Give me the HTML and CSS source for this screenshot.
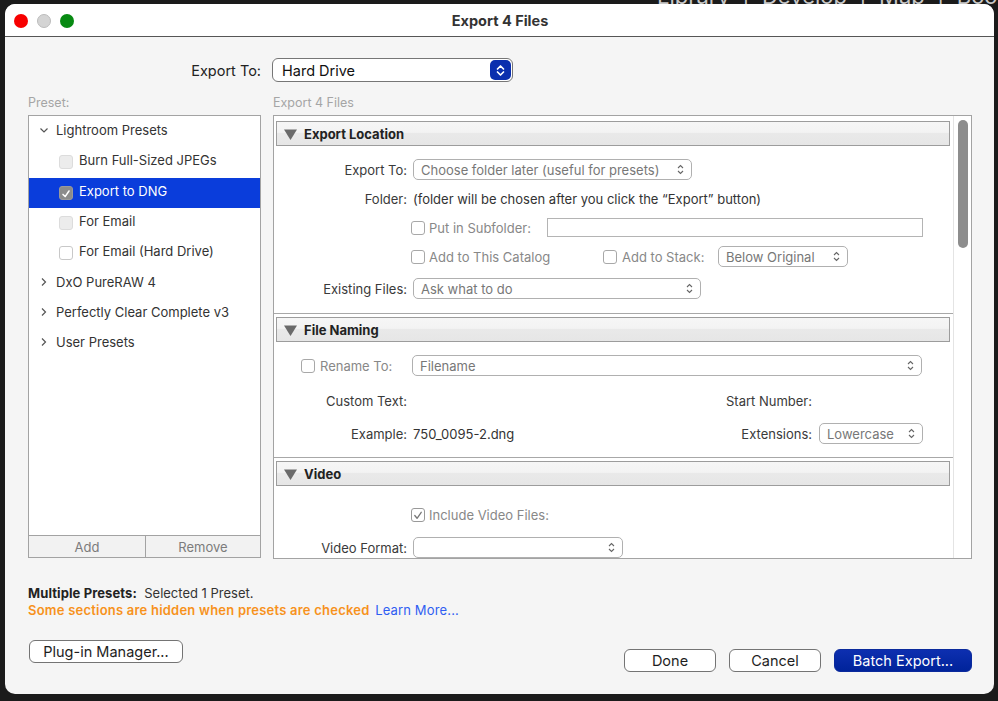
FILE: index.html
```html
<!DOCTYPE html>
<html>
<head>
<meta charset="utf-8">
<title>Export 4 Files</title>
<link rel="stylesheet" href="styles.css">
</head>
<body>
<div class="desktop">
  <div class="app-menu">Library &nbsp;|&nbsp; Develop &nbsp;|&nbsp; Map &nbsp;|&nbsp; Book</div>
  <div class="window">
    <div class="titlebar">
      <div class="lights"><span class="light red"></span><span class="light grey"></span><span class="light green"></span></div>
      <div class="title">Export 4 Files</div>
    </div>
    <div class="content">
      <div class="export-row">
        <div class="export-label">Export To:</div>
        <div class="main-popup">
          <span>Hard Drive</span>
          <span class="blue-step"><svg width="9" height="13" viewBox="0 0 9 13"><path d="M1.5 5 L4.5 2 L7.5 5 M1.5 8 L4.5 11 L7.5 8" fill="none" stroke="#fff" stroke-width="1.7" stroke-linecap="round" stroke-linejoin="round"/></svg></span>
        </div>
      </div>
      <div class="caption-row"><div class="caption">Preset:</div><div class="caption">Export 4 Files</div></div>
      <div class="panels">
        <div class="preset-panel">
          <div class="tree">
            <div class="tree-row folder"><svg class="chev" width="10" height="7" viewBox="0 0 10 7"><path d="M1.5 1.5 L5 5 L8.5 1.5" fill="none" stroke="#555" stroke-width="1.2"/></svg><span>Lightroom Presets</span></div>
            <div class="tree-row child"><span class="tbox dis"></span><span>Burn Full-Sized JPEGs</span></div>
            <div class="tree-row child selected"><span class="tbox on"><svg width="14" height="14" viewBox="0 0 14 14"><path d="M3.5 7.5 L6 10 L10.5 3.5" fill="none" stroke="#fff" stroke-width="1.8" stroke-linecap="round" stroke-linejoin="round"/></svg></span><span>Export to DNG</span></div>
            <div class="tree-row child"><span class="tbox dis"></span><span>For Email</span></div>
            <div class="tree-row child"><span class="tbox"></span><span>For Email (Hard Drive)</span></div>
            <div class="tree-row folder"><svg class="chev" width="10" height="10" viewBox="0 0 10 10"><path d="M3 1.5 L6.5 5 L3 8.5" fill="none" stroke="#555" stroke-width="1.2"/></svg><span>DxO PureRAW 4</span></div>
            <div class="tree-row folder"><svg class="chev" width="10" height="10" viewBox="0 0 10 10"><path d="M3 1.5 L6.5 5 L3 8.5" fill="none" stroke="#555" stroke-width="1.2"/></svg><span>Perfectly Clear Complete v3</span></div>
            <div class="tree-row folder"><svg class="chev" width="10" height="10" viewBox="0 0 10 10"><path d="M3 1.5 L6.5 5 L3 8.5" fill="none" stroke="#555" stroke-width="1.2"/></svg><span>User Presets</span></div>
          </div>
          <div class="tree-buttons"><div class="tb">Add</div><div class="tb">Remove</div></div>
        </div>
        <div class="settings-panel">
          <div class="sections">
            <div class="section first">
              <div class="sec-head"><svg class="tri" width="13" height="11" viewBox="0 0 13 11"><polygon points="0,0.5 13,0.5 6.5,11" fill="#6a6a6a"/></svg>Export Location</div>
              <div class="sec-body loc">
                <div class="row">
                  <div class="lbl">Export To:</div>
                  <div class="popup w-chooser"><span>Choose folder later (useful for presets)</span><svg class="step" width="7" height="11" viewBox="0 0 7 11"><path d="M1 4 L3.5 1.5 L6 4 M1 7 L3.5 9.5 L6 7" fill="none" stroke="#666" stroke-width="1.1"/></svg></div>
                </div>
                <div class="row">
                  <div class="lbl">Folder:</div>
                  <div class="val">(folder will be chosen after you click the “Export” button)</div>
                </div>
                <div class="row">
                  <div class="lbl"></div>
                  <span class="cbox ml"></span><span class="clabel sub">Put in Subfolder:</span>
                  <div class="field"></div>
                </div>
                <div class="row">
                  <div class="lbl"></div>
                  <span class="cbox ml"></span><span class="clabel cat">Add to This Catalog</span>
                  <span class="cbox"></span><span class="clabel stack">Add to Stack:</span>
                  <div class="popup w-below"><span>Below Original</span><svg class="step" width="7" height="11" viewBox="0 0 7 11"><path d="M1 4 L3.5 1.5 L6 4 M1 7 L3.5 9.5 L6 7" fill="none" stroke="#666" stroke-width="1.1"/></svg></div>
                </div>
                <div class="row existing">
                  <div class="lbl">Existing Files:</div>
                  <div class="popup w-ask"><span>Ask what to do</span><svg class="step" width="7" height="11" viewBox="0 0 7 11"><path d="M1 4 L3.5 1.5 L6 4 M1 7 L3.5 9.5 L6 7" fill="none" stroke="#666" stroke-width="1.1"/></svg></div>
                </div>
              </div>
            </div>
            <div class="section">
              <div class="sec-head"><svg class="tri" width="13" height="11" viewBox="0 0 13 11"><polygon points="0,0.5 13,0.5 6.5,11" fill="#6a6a6a"/></svg>File Naming</div>
              <div class="sec-body naming">
                <div class="row">
                  <span class="cbox rename"></span><span class="clabel ren">Rename To:</span>
                  <div class="popup w-file"><span>Filename</span><svg class="step" width="7" height="11" viewBox="0 0 7 11"><path d="M1 4 L3.5 1.5 L6 4 M1 7 L3.5 9.5 L6 7" fill="none" stroke="#666" stroke-width="1.1"/></svg></div>
                </div>
                <div class="row custom">
                  <div class="lbl">Custom Text:</div>
                  <div class="right-lbl">Start Number:</div>
                </div>
                <div class="row example">
                  <div class="lbl">Example:</div>
                  <div class="val ex-val">750_0095-2.dng</div>
                  <div class="ext-lbl">Extensions:</div>
                  <div class="popup w-lower"><span>Lowercase</span><svg class="step" width="7" height="11" viewBox="0 0 7 11"><path d="M1 4 L3.5 1.5 L6 4 M1 7 L3.5 9.5 L6 7" fill="none" stroke="#666" stroke-width="1.1"/></svg></div>
                </div>
              </div>
            </div>
            <div class="section">
              <div class="sec-head"><svg class="tri" width="13" height="11" viewBox="0 0 13 11"><polygon points="0,0.5 13,0.5 6.5,11" fill="#6a6a6a"/></svg>Video</div>
              <div class="sec-body video">
                <div class="row">
                  <div class="lbl"></div>
                  <span class="cbox ml checked"><svg width="13" height="13" viewBox="0 0 13 13"><path d="M3 6.5 L5.5 9.5 L10 3" fill="none" stroke="#777" stroke-width="1.4" stroke-linecap="round" stroke-linejoin="round"/></svg></span><span class="clabel">Include Video Files:</span>
                </div>
                <div class="row vformat">
                  <div class="lbl">Video Format:</div>
                  <div class="popup w-video"><span></span><svg class="step" width="7" height="11" viewBox="0 0 7 11"><path d="M1 4 L3.5 1.5 L6 4 M1 7 L3.5 9.5 L6 7" fill="none" stroke="#666" stroke-width="1.1"/></svg></div>
                </div>
              </div>
            </div>
          </div>
          <div class="scrollbar"><div class="thumb"></div></div>
        </div>
      </div>
      <div class="status">
        <div><b>Multiple Presets:</b>&nbsp; Selected 1 Preset.</div>
        <div><span class="warn">Some sections are hidden when presets are checked</span> <span class="link">Learn More...</span></div>
      </div>
      <div class="footer">
        <div class="btn plugin">Plug-in Manager...</div>
        <div class="actions">
          <div class="btn done">Done</div>
          <div class="btn cancel">Cancel</div>
          <div class="btn primary">Batch Export...</div>
        </div>
      </div>
    </div>
  </div>
</div>
</body>
</html>
```

FILE: styles.css
```css
* { box-sizing: border-box; }
html, body { margin: 0; padding: 0; }
body {
  width: 998px;
  height: 701px;
  background: #1b1b1b;
  font-family: "Inter", "Liberation Sans", sans-serif;
  font-size: 13px;
  color: #333;
  overflow: hidden;
}
.desktop { position: relative; width: 998px; height: 701px; overflow: hidden; }
.app-menu {
  position: absolute;
  left: 657px;
  top: -17px;
  font-size: 22px;
  color: #c8c8c8;
  white-space: nowrap;
}
.window {
  position: absolute;
  left: 5px;
  top: 4px;
  width: 989px;
  height: 690px;
  background: #f5f5f5;
  border-radius: 10px;
  overflow: hidden;
  display: flex;
  flex-direction: column;
}
.titlebar {
  height: 33px;
  background: #fff;
  border-bottom: 1px solid #565656;
  display: flex;
  align-items: center;
  justify-content: center;
  position: relative;
  flex-shrink: 0;
}
.lights {
  position: absolute;
  left: 9px;
  top: 10px;
  display: flex;
  gap: 9px;
}
.light { width: 14px; height: 14px; border-radius: 50%; display: block; }
.light.red { background: #f70000; }
.light.grey { background: #d4d4d4; border: 1px solid #bbb; }
.light.green { background: #078a12; }
.title { font-weight: 700; font-size: 14.5px; color: #333; padding-left: 1px; }

.content {
  padding: 0 22px 21px 23px;
  display: flex;
  flex-direction: column;
}
.export-row {
  margin-top: 21px;
  display: grid;
  grid-template-columns: 233px 241px;
  column-gap: 11px;
  align-items: center;
}
.export-label { text-align: right; font-size: 14.5px; color: #222; }
.main-popup {
  height: 24px;
  border: 1px solid #767676;
  border-radius: 6px;
  background: #fff;
  display: flex;
  align-items: center;
  justify-content: space-between;
  padding-left: 9px;
  padding-right: 1px;
  font-size: 14.5px;
  color: #111;
}
.blue-step {
  width: 21px;
  height: 20px;
  background: #0b2fae;
  border-radius: 5px;
  display: flex;
  align-items: center;
  justify-content: center;
}
.caption-row {
  margin-top: 14px;
  height: 14px;
  display: grid;
  grid-template-columns: 233px 699px;
  column-gap: 12px;
  line-height: 14px;
}
.caption { color: #a5a5a5; font-size: 12.5px; }
.panels {
  margin-top: 5px;
  display: grid;
  grid-template-columns: 233px 699px;
  column-gap: 12px;
  height: 444px;
}
.preset-panel {
  border: 1px solid #a3a3a3;
  background: #fff;
  height: 443px;
  display: flex;
  flex-direction: column;
}
.tree { flex: 1; padding-top: 1px; }
.tree-row {
  height: 30.3px;
  display: flex;
  align-items: center;
  padding-bottom: 4px;
  white-space: nowrap;
  color: #333;
}
.tree-row.folder { padding-left: 10px; }
.tree-row.folder .chev { margin-right: 7px; }
.tree-row.child { padding-left: 30px; }
.tree-row.selected { background: #0a3ddb; color: #fff; }
.tbox {
  width: 14px;
  height: 14px;
  border-radius: 3px;
  border: 1px solid #c8c8c8;
  background: #fff;
  margin-right: 6px;
  margin-top: 4px;
  display: inline-flex;
}
.tbox.dis { background: #ececec; border-color: #dcdcdc; }
.tbox.on { background: #8c8c8c; border-color: #9a9a9a; }
.tree-buttons {
  height: 22px;
  border-top: 1px solid #a3a3a3;
  display: grid;
  grid-template-columns: 116px 1fr;
  background: #f2f2f2;
}
.tb {
  display: flex;
  align-items: center;
  justify-content: center;
  color: #7c7c7c;
  padding-top: 1px;
}
.tb + .tb { border-left: 1px solid #a3a3a3; }

.settings-panel {
  border: 1px solid #a3a3a3;
  background: #fff;
  display: flex;
  overflow: hidden;
}
.sections { width: 679px; overflow: hidden; }
.scrollbar {
  width: 18px;
  border-left: 1px solid #e4e4e4;
  padding: 4px 3px 0 4px;
}
.thumb { height: 128px; background: #8d8d8d; border-radius: 5px; }
.section { border-top: 1px solid #a8a8a8; padding: 3px 3px 0 2px; }
.section.first { border-top: none; padding-top: 5px; }
.sec-head {
  height: 25px;
  border: 1px solid #9c9c9c;
  background: linear-gradient(#f6f6f6 0%, #f3f3f3 45%, #e9e9e9 50%, #e6e6e6 100%);
  display: flex;
  align-items: center;
  font-weight: 700;
  color: #222;
  padding-left: 7px;
}
.tri { margin-right: 7px; margin-top: 1px; }
.sec-body { margin-left: -2px; }
.row {
  height: 29px;
  display: flex;
  align-items: center;
  white-space: nowrap;
}
.lbl { width: 133px; text-align: right; color: #3a3a3a; flex-shrink: 0; }
.val { margin-left: 6px; color: #333; }
.popup {
  height: 21px;
  border: 1px solid #b0b0b0;
  border-radius: 5px;
  background: #fff;
  display: flex;
  align-items: center;
  justify-content: space-between;
  padding: 0 7px 0 7px;
  color: #777;
  margin-left: 6px;
}
.step { flex-shrink: 0; }
.w-chooser { width: 279px; }
.w-ask { width: 288px; }
.w-below { width: 130px; margin-left: 0; }
.w-file { width: 510px; margin-left: 22px; }
.w-lower { width: 104px; margin-left: 7px; }
.w-video { width: 210px; }
.cbox {
  width: 14px;
  height: 14px;
  border: 1px solid #a8a8a8;
  border-radius: 3px;
  background: #fff;
  display: inline-flex;
  flex-shrink: 0;
}
.cbox.ml { margin-left: 4px; }
.cbox.checked { border-color: #999; }
.clabel { color: #888; margin-left: 4px; }
.clabel.sub { width: 118px; }
.clabel.cat { width: 174px; }
.clabel.stack { width: 96px; margin-left: 5px; }
.field {
  width: 376px;
  height: 19px;
  border: 1px solid #b4b4b4;
  background: #fff;
}
.loc { padding-top: 9px; padding-bottom: 10px; }
.loc .existing { margin-top: 3px; }
.naming { padding-top: 9px; padding-bottom: 9px; }
.cbox.rename { margin-left: 27px; }
.clabel.ren { width: 70px; margin-left: 5px; }
.custom { margin-top: 6px; }
.right-lbl { width: 405px; text-align: right; color: #3a3a3a; }
.example { margin-top: 4px; }
.ex-val { width: 328px; }
.ext-lbl { width: 71px; text-align: right; color: #3a3a3a; }
.video { padding-top: 14px; }
.vformat { margin-top: 4px; }

.status { margin-top: 26px; line-height: 17px; color: #333; }
.status b { color: #222; font-weight: 700; letter-spacing: 0.1px; }
.warn { color: #f7921c; font-weight: 600; letter-spacing: 0.22px; }
.link { color: #2f5ef2; margin-left: 2px; letter-spacing: 0.15px; }
.footer {
  margin-top: 21px;
  height: 32px;
  display: flex;
  justify-content: space-between;
  align-items: flex-end;
}
.btn {
  height: 23px;
  border: 1px solid #747474;
  border-radius: 6px;
  background: #fff;
  display: flex;
  align-items: center;
  justify-content: center;
  font-size: 14.5px;
  color: #1e1e1e;
}
.btn.plugin { width: 154px; align-self: flex-start; margin-left: 1px; }
.actions { display: flex; gap: 13px; }
.btn.done { width: 92px; }
.btn.cancel { width: 92px; }
.btn.primary {
  width: 138px;
  background: linear-gradient(#0d2fb0, #00239a);
  border-color: #0b2a9c;
  color: #fff;
}
```
